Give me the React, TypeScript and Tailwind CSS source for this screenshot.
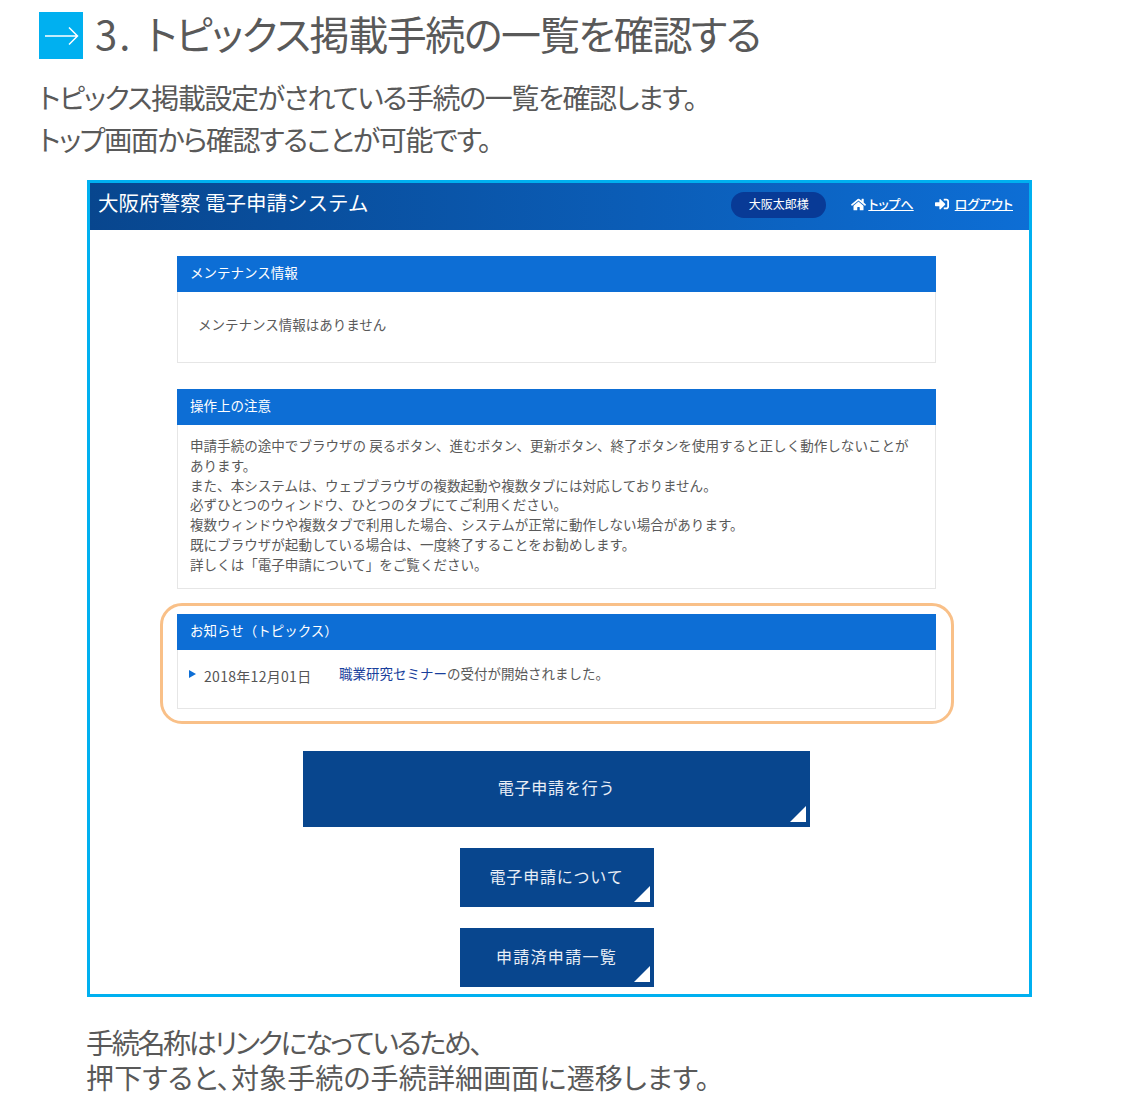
import { FaHome, FaSignInAlt } from "react-icons/fa";

const jp = "font-['Noto_Sans_CJK_JP','Noto_Sans',sans-serif]";

function Panel({ title, bodyClass, children }: { title: string; bodyClass: string; children: React.ReactNode }) {
  return (
    <section className="w-[759px] border border-[#e6e6e6] border-t-0">
      <h2 className="-mx-px h-[36px] bg-[#0d6ed5] pl-[13px] text-[13.5px] leading-[33px] font-normal text-white">
        {title}
      </h2>
      <div className={bodyClass}>{children}</div>
    </section>
  );
}

function NavButton({ label, size }: { label: string; size: string }) {
  return (
    <a className={`relative flex items-center justify-center bg-[#08468e] pb-[4px] text-[16px] text-[#e8eef6] ${size}`}>
      <span>{label}</span>
      <svg className="absolute right-[4px] bottom-[5px]" width="16" height="16" viewBox="0 0 16 16">
        <path d="M16 0V16H0Z" fill="#fff" />
      </svg>
    </a>
  );
}

export default function App() {
  return (
    <div className={`${jp} h-[1116px] w-[1124px] overflow-hidden bg-white pt-[12px] text-[#595959]`}>
      <div className="ml-[39px] flex items-center">
        <div className="flex h-[47px] w-[44px] items-center justify-center bg-[#00b0f0]">
          <svg width="38" height="24" viewBox="0 0 38 24" fill="none" stroke="#fff" strokeWidth="1.5">
            <path d="M3 12H35M27 3.5L35.5 12L27 20.5" />
          </svg>
        </div>
        <h1 className="mb-[4px] ml-[12px] text-[40px] leading-[43px] font-normal tracking-[-1.4px] [font-feature-settings:'palt']">
          <span className="mr-[14px] tracking-[2px]">3.</span>トピックス掲載手続の一覧を確認する
        </h1>
      </div>

      <p className="mt-[17px] ml-[39px] text-[28px] leading-[42px] tracking-[-1.4px] [font-feature-settings:'palt']">
        トピックス掲載設定がされている手続の一覧を確認します。
        <br />
        トップ画面から確認することが可能です。
      </p>

      <div className="relative mt-[20px] ml-[87px] h-[817px] w-[945px] border-[3px] border-[#00b0f0]">
        <header className="flex h-[47px] items-center bg-gradient-to-r from-[#08468e] to-[#0d6ed5] pr-[16px] pb-[3px] pl-[8px] text-white">
          <div className="mb-[5px] text-[20.5px]">大阪府警察 電子申請システム</div>
          <div className="ml-auto flex h-[26px] w-[95px] items-center justify-center rounded-full bg-[#083a96] pb-[2px] text-[12px]">
            大阪太郎様
          </div>
          <a className="mb-[2px] ml-[25px] flex items-center text-[13px] font-medium underline [font-feature-settings:'palt']">
            <FaHome size={15} className="mr-[2px]" />
            トップへ
          </a>
          <a className="mb-[2px] ml-[21px] flex items-center text-[13px] font-medium underline [font-feature-settings:'palt']">
            <FaSignInAlt size={14} className="mr-[6px]" />
            ログアウト
          </a>
        </header>

        <main className="flex flex-col items-center pt-[26px] pr-[6px]">
          <Panel title="メンテナンス情報" bodyClass="h-[70px] pt-[22px] pl-[20px] text-[13.5px] leading-[20px]">
            メンテナンス情報はありません
          </Panel>
          <div className="h-[26px]" />
          <Panel title="操作上の注意" bodyClass="h-[163px] pt-[11px] pl-[12px] text-[13.55px] leading-[19.8px]">
            申請手続の途中でブラウザの 戻るボタン、進むボタン、更新ボタン、終了ボタンを使用すると正しく動作しないことが
            <br />
            あります。
            <br />
            また、本システムは、ウェブブラウザの複数起動や複数タブには対応しておりません。
            <br />
            必ずひとつのウィンドウ、ひとつのタブにてご利用ください。
            <br />
            複数ウィンドウや複数タブで利用した場合、システムが正常に動作しない場合があります。
            <br />
            既にブラウザが起動している場合は、一度終了することをお勧めします。
            <br />
            詳しくは「電子申請について」をご覧ください。
          </Panel>
          <div className="h-[25px]" />
          <Panel title="お知らせ（トピックス）" bodyClass="h-[58px] pt-[13px] pl-[11px] text-[13.5px] leading-[20px]">
            <div className="flex items-start">
              <svg className="mt-[7px]" width="7" height="8" viewBox="0 0 7 8">
                <path d="M0 0L7 4L0 8Z" fill="#0d6ed5" />
              </svg>
              <span className="mt-[3px] ml-[8px] w-[135px] text-[14px] tracking-[0.3px] text-[#555]">2018年12月01日</span>
              <span>
                <a className="text-[#1a3f9c]">職業研究セミナー</a>の受付が開始されました。
              </span>
            </div>
          </Panel>

          <div className="mt-[42px] flex flex-col items-center gap-[21px]">
            <NavButton label="電子申請を行う" size="h-[76px] w-[507px] tracking-[0.8px]" />
            <NavButton label="電子申請について" size="h-[59px] w-[194px] tracking-[0.8px]" />
            <NavButton label="申請済申請一覧" size="h-[59px] w-[194px] tracking-[1.3px]" />
          </div>
        </main>

        <div className="pointer-events-none absolute top-[420px] left-[70px] h-[121px] w-[794px] rounded-[22px] border-[3px] border-[#f9c088]" />
      </div>

      <div className="mt-[28px] ml-[86px] text-[28px] leading-[35px] [font-feature-settings:'palt']">
        <p className="tracking-[-2.3px]">手続名称はリンクになっているため、</p>
        <p className="tracking-[0.15px]">押下すると、対象手続の手続詳細画面に遷移します。</p>
      </div>
    </div>
  );
}
